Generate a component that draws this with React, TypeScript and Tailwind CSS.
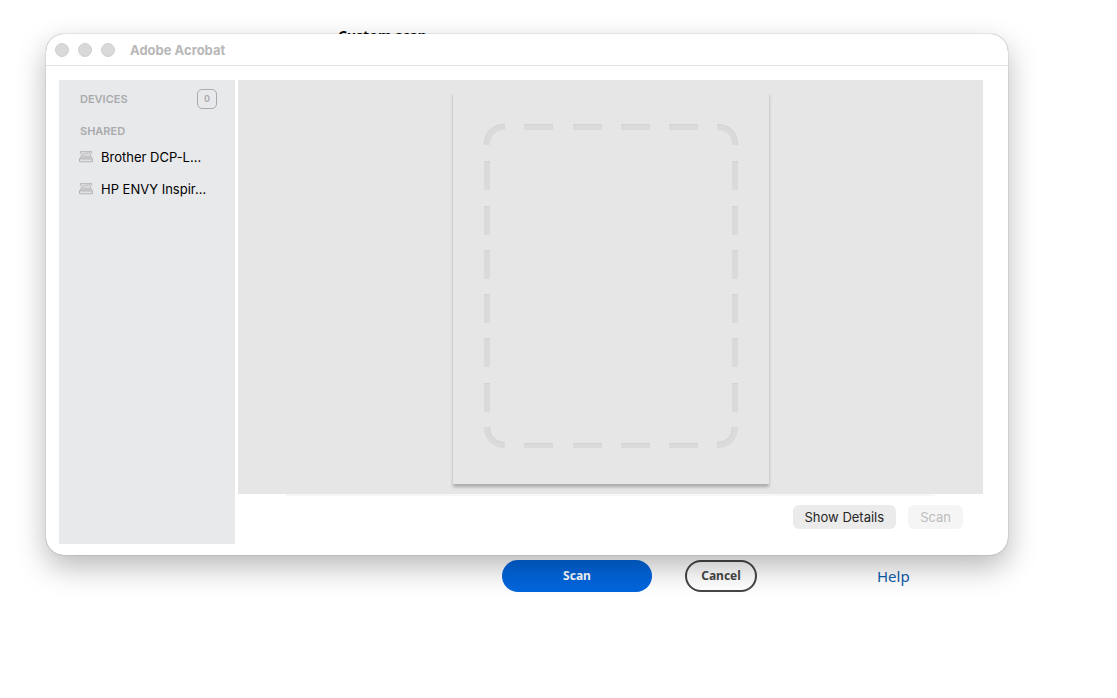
const devices = [
  { id: "brother", name: "Brother DCP-L..." },
  { id: "hp", name: "HP ENVY Inspir..." },
];

const columns = [40, 89, 137, 185];
const rows = [37, 82, 126, 170, 214, 259];

function ScannerIcon() {
  return (
    <svg width="14" height="12" viewBox="0 0 14 12" fill="none" aria-hidden="true">
      <path d="M.8 .6h12.400L11.600 3.500v1.200L13.500 8H.5l1.900-3.300V3.500z" fill="#dcdcde" />
      <path d="M2.800 4.800h8.400l1 2.400H1.800z" fill="#c6c6c8" />
      <path d="M.9 .6h12.200M1 .8l1.500 2.700v1.300L.6 7.900M13 .8l-1.500 2.700v1.300l1.900 3.100" stroke="#b0b0b2" strokeWidth=".8" />
      <path d="M3.500 3.700L10.800 1.500" stroke="#bababc" strokeWidth=".8" />
      <path d="M.5 7.900h13v2.900H.5z" fill="#e2e2e4" stroke="#a8a8aa" strokeWidth=".8" />
    </svg>
  );
}

function Dash({ x, y, w, h }: { x: number; y: number; w: number; h: number }) {
  return (
    <g>
      <rect x={x} y={y} width={w} height={h} fill="#dadada" />
      <rect x={x} y={y} width={w} height="1" fill="#d3d3d3" />
    </g>
  );
}

function ScanArea() {
  return (
    <svg width="254" height="324" viewBox="0 0 254 324" fill="none" aria-hidden="true">
      <g stroke="#dadada" strokeWidth="6">
        <path d="M3 21C3 10 10 3 21 3" />
        <path d="M233 3c11 0 18 7 18 18" />
        <path d="M251 303c0 11-7 18-18 18" />
        <path d="M21 321c-11 0-18-7-18-18" />
      </g>
      <g stroke="#d3d3d3">
        <path d="M.5 21C.5 8 8 .5 21 .5" />
        <path d="M233 .5c13 0 20.500 7.500 20.500 20.500" />
        <path d="M248.500 303c0 9-6 15.500-15.500 15.500" />
        <path d="M21 318.500c-9 0-15.500-6-15.500-15.500" />
      </g>
      {columns.map((x) => (
        <g key={x}>
          <Dash x={x} y={0} w={29} h={6} />
          <Dash x={x} y={319} w={29} h={5} />
        </g>
      ))}
      {rows.map((y) => (
        <g key={y}>
          <Dash x={0} y={y} w={6} h={29} />
          <Dash x={248} y={y} w={6} h={29} />
        </g>
      ))}
    </svg>
  );
}

function Sidebar() {
  return (
    <aside className="w-44 shrink-0 bg-[#e8e9eb] pt-[9px] pr-[18px] pl-5">
      <div className="flex h-5 items-center justify-between pl-px text-[#a9aaac]">
        <h2 className="text-[11px] leading-4 font-semibold">DEVICES</h2>
        <span className="flex size-5 items-center justify-center rounded-[5px] border border-[#a9aaac] text-[9px] font-semibold">
          0
        </span>
      </div>
      <h2 className="mt-3.5 pl-px text-[11px] leading-4 font-semibold text-[#a9aaac]">SHARED</h2>
      <ul className="mt-1.5">
        {devices.map((device) => (
          <li key={device.id} className="mb-2">
            <button type="button" className="flex h-6 w-full items-center gap-2 text-left text-[13px] whitespace-nowrap text-black">
              <ScannerIcon />
              <span className="pt-0.5">{device.name}</span>
            </button>
          </li>
        ))}
      </ul>
    </aside>
  );
}

function ScannerWindow() {
  return (
    <section
      role="dialog"
      aria-labelledby="window-title"
      className="relative z-10 mr-[109px] ml-[46px] rounded-[18px] bg-white font-[Inter,sans-serif] shadow-[0_0_1px_rgba(0,0,0,0.6),0_12px_30px_rgba(0,0,0,0.28)]"
    >
      <header className="flex h-8 items-center border-b border-[#e3e3e3] pl-[9px]">
        <div className="flex gap-[9px]">
          <button type="button" aria-label="Close" className="size-3.5 rounded-full border border-[#cfcfcf] bg-[#d9d9d9]" />
          <button type="button" aria-label="Minimize" className="size-3.5 rounded-full border border-[#cfcfcf] bg-[#d9d9d9]" />
          <button type="button" aria-label="Zoom" className="size-3.5 rounded-full border border-[#cfcfcf] bg-[#d9d9d9]" />
        </div>
        <h1 id="window-title" className="ml-[15px] pt-0.5 text-[13px] font-bold text-[#b8b8b8]">
          Adobe Acrobat
        </h1>
      </header>

      <div className="flex gap-[3px] pt-3.5 pr-[25px] pb-[11px] pl-[13px]">
        <Sidebar />
        <div className="min-w-0 flex-1 pb-[15px]">
          {/* Preview */}
          <div className="flex justify-center bg-[#e6e6e6] pt-3 pb-2.5">
            <div className="flex h-[392px] w-[316px] justify-center bg-[#e6e6e6] pt-8 shadow-[0_3px_3px_rgba(0,0,0,0.26)]">
              <ScanArea />
            </div>
          </div>
          <div className="mx-12 h-0.5 bg-[#f7f7f7]" />

          <div className="flex justify-end gap-3 pt-[9px] pr-5">
            <button type="button" className="h-6 rounded-md bg-[#ebebeb] px-3 pt-px text-[13px] text-[#262626]">
              Show Details
            </button>
            <button type="button" disabled className="h-6 rounded-md bg-[#f5f5f5] px-3 pt-px text-[13px] text-[#bcbcbc]">
              Scan
            </button>
          </div>
        </div>
      </div>
    </section>
  );
}

export default function App() {
  return (
    <main className="min-h-screen bg-white pt-6 font-['Noto_Sans',sans-serif]">
      <h2 className="ml-[338px] h-6 text-sm leading-6 font-bold text-black">Custom scan</h2>
      <div className="-mt-3.5">
        <ScannerWindow />
      </div>
      <footer className="mt-[5px] flex items-center pl-[502px]">
        <button type="button" className="h-8 w-[150px] rounded-full bg-[#0265dc] text-xs font-bold text-white">
          Scan
        </button>
        <button type="button" className="ml-[33px] h-8 w-[72px] rounded-full border-2 border-[#464646] text-xs font-bold text-[#464646]">
          Cancel
        </button>
        <a href="#help" className="ml-[120px] text-[15px] text-[#0b5cad]">
          Help
        </a>
      </footer>
    </main>
  );
}
